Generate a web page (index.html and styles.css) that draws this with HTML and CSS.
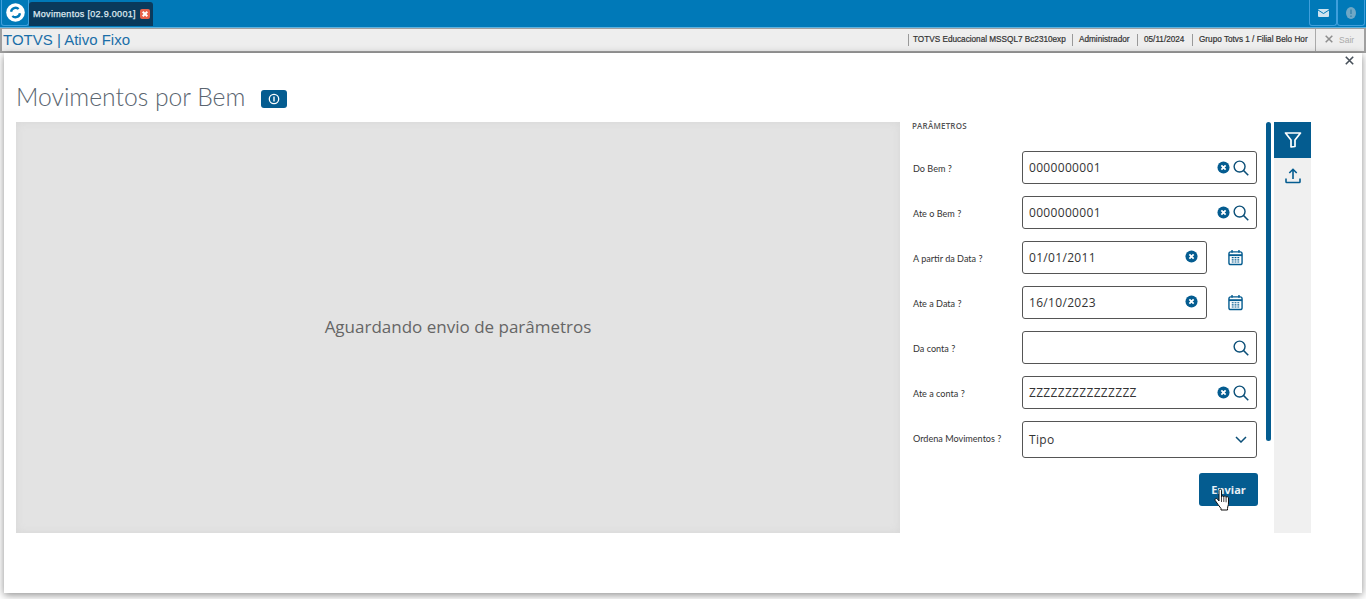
FILE: index.html
```html
<!DOCTYPE html>
<html lang="pt-BR">
<head>
<meta charset="utf-8">
<title>Movimentos por Bem</title>
<link rel="stylesheet" href="styles.css">
</head>
<body>
<svg class="defs" width="0" height="0" aria-hidden="true">
  <symbol id="clear" viewBox="0 0 14 14"><circle cx="7" cy="7" r="6.5" fill="#045c90"/><path d="M4.700 4.700l4.600 4.600M9.300 4.700l-4.600 4.600" stroke="#fff" stroke-width="1.900" fill="none"/></symbol>
  <symbol id="search" viewBox="0 0 17 17"><circle cx="7" cy="7" r="5.800" stroke="#0b4f78" stroke-width="1.500" fill="none"/><path d="M11.200 11.200l5 5" stroke="#0b4f78" stroke-width="1.700" fill="none"/></symbol>
  <symbol id="calendar" viewBox="0 0 16 17"><rect x="1" y="2.500" width="14" height="13.500" rx="2" fill="none" stroke="#045c90" stroke-width="1.500"/><path d="M1 6h14" stroke="#045c90" stroke-width="2"/><path d="M4.300 .5v3M11.700 .5v3" stroke="#045c90" stroke-width="1.500"/><path d="M4 8.700h2M7 8.700h2M10 8.700h2M4 11h2M7 11h2M10 11h2M4 13.300h2M7 13.300h2M10 13.300h2" stroke="#045c90" stroke-width="1.200"/></symbol>
</svg>

<header class="topbar">
  <div class="logo">
    <svg width="19" height="19" viewBox="0 0 18 18"><circle cx="9" cy="9" r="8.800" fill="#fff"/><path d="M4.800 8.300A4.300 4.300 0 0 1 12 5.700M13.200 9.700A4.300 4.300 0 0 1 6 12.300" stroke="#0079b8" stroke-width="2.200" fill="none"/></svg>
  </div>
  <div class="tab">
    <span class="tab-text">Movimentos [02.9.0001]</span>
    <svg class="tab-close" width="10" height="10" viewBox="0 0 10 10"><rect width="10" height="10" rx="2" fill="#e8604a"/><path d="M2.700 2.700l4.600 4.600M7.300 2.700l-4.600 4.600" stroke="#fff" stroke-width="2"/></svg>
  </div>
  <div class="top-actions">
    <div class="top-btn">
      <svg width="11" height="8" viewBox="0 0 11 8"><rect width="11" height="8" rx="1" fill="#cfe3ef"/><path d="M0 1l5.500 3.500L11 1" stroke="#0079b8" stroke-width="1" fill="none"/></svg>
    </div>
    <div class="top-btn">
      <svg width="10" height="12" viewBox="0 0 10 12"><ellipse cx="5" cy="6" rx="5" ry="6" fill="#6fa8c6"/><path d="M5 2.500v4.500M5 8.500v1.500" stroke="#3f88ae" stroke-width="1.600"/></svg>
    </div>
  </div>
</header>

<div class="statusbar">
  <div class="app-name">TOTVS | Ativo Fixo</div>
  <div class="status-info">
    <span class="info info-db">TOTVS Educacional MSSQL7 Bc2310exp</span>
    <span class="info info-user">Administrador</span>
    <span class="info info-date">05/11/2024</span>
    <span class="info info-branch">Grupo Totvs 1 / Filial Belo Hor</span>
    <span class="info info-exit"><svg class="exit-x" width="8" height="8" viewBox="0 0 8 8"><path d="M.7.7l6.600 6.600M7.300.7L.7 7.300" stroke="#8d8d8d" stroke-width="1.500"/></svg>Sair</span>
  </div>
</div>

<main class="window">
  <div class="close-row">
    <svg width="9" height="9" viewBox="0 0 9 9"><path d="M.8.8l7.400 7.400M8.200.8L.8 8.200" stroke="#47505a" stroke-width="1.600"/></svg>
  </div>
  <div class="title-row">
    <h1 class="page-title">Movimentos por Bem</h1>
    <span class="info-badge">
      <svg width="12" height="12" viewBox="0 0 12 12"><circle cx="6" cy="6" r="4.700" fill="none" stroke="#fff" stroke-width="1.300"/><path d="M6 3.400v5.200" stroke="#fff" stroke-width="1.400"/></svg>
    </span>
  </div>
  <div class="content">
    <section class="preview">Aguardando envio de parâmetros</section>
    <section class="params">
      <div class="params-title">PARÂMETROS</div>
      <div class="form">
        <label class="lbl">Do Bem ?</label>
        <div class="input"><span class="val">0000000001</span><svg class="ic-clear"><use href="#clear"/></svg><svg class="ic-search"><use href="#search"/></svg></div>
        <label class="lbl">Ate o Bem ?</label>
        <div class="input"><span class="val">0000000001</span><svg class="ic-clear"><use href="#clear"/></svg><svg class="ic-search"><use href="#search"/></svg></div>
        <label class="lbl">A partir da Data ?</label>
        <div class="date-wrap"><div class="input input-date"><span class="val">01/01/2011</span><svg class="ic-clear"><use href="#clear"/></svg></div><svg class="ic-cal"><use href="#calendar"/></svg></div>
        <label class="lbl">Ate a Data ?</label>
        <div class="date-wrap"><div class="input input-date"><span class="val">16/10/2023</span><svg class="ic-clear"><use href="#clear"/></svg></div><svg class="ic-cal"><use href="#calendar"/></svg></div>
        <label class="lbl">Da conta ?</label>
        <div class="input"><span class="val"></span><svg class="ic-search"><use href="#search"/></svg></div>
        <label class="lbl">Ate a conta ?</label>
        <div class="input"><span class="val">ZZZZZZZZZZZZZZZ</span><svg class="ic-clear"><use href="#clear"/></svg><svg class="ic-search"><use href="#search"/></svg></div>
        <label class="lbl">Ordena Movimentos ?</label>
        <div class="input input-select"><span class="val">Tipo</span><svg class="ic-chev" viewBox="0 0 12 7"><path d="M1 1l5 5 5-5" fill="none" stroke="#0b4f78" stroke-width="1.500"/></svg></div>
      </div>
      <div class="actions">
        <button class="send" type="button">Enviar
          <svg class="cursor" width="17" height="24" viewBox="0 0 17 24"><path d="M5 2.500c0-1.800 2.500-1.800 2.500 0V9c0-1.500 2.300-1.500 2.300 0 0-1.300 2.300-1.300 2.300.3 0-1 2.400-.8 2.400.7v5c0 2.500-.8 3-1 5.500v1.500H7v-1.500C5 18 3 15 1.200 12.500c-.8-1.300.8-2.800 2-1.700L5 13z" fill="#fff" stroke="#111" stroke-width="1"/><path d="M7.500 9v5M9.800 9v5M12.100 9.300v5" stroke="#111" stroke-width=".8" fill="none"/></svg>
        </button>
      </div>
    </section>
    <div class="scrollbar"><div class="thumb"></div></div>
    <nav class="sidetabs">
      <div class="sidetab active">
        <svg width="18" height="18" viewBox="0 0 18 18"><path d="M1.500 2h15L11 9v6.500L7 16V9z" fill="none" stroke="#fff" stroke-width="1.700" stroke-linejoin="round"/></svg>
      </div>
      <div class="sidetab">
        <svg width="16" height="16" viewBox="0 0 16 16"><path d="M8 11V1.500M4.300 5L8 1.300 11.700 5" fill="none" stroke="#045c90" stroke-width="1.600"/><path d="M1 10.500v3.200c0 .5.400.8.800.8h12.400c.4 0 .8-.3.800-.8v-3.200" fill="none" stroke="#045c90" stroke-width="1.600"/></svg>
      </div>
    </nav>
  </div>
</main>
</body>
</html>
```

FILE: styles.css
```css
* { box-sizing: border-box; }
html, body { margin: 0; height: 599px; overflow: hidden; }
body { background: #fff; display: flex; flex-direction: column; font-family: "Open Sans", sans-serif; }
.defs { position: absolute; }

.topbar { height: 28px; flex: none; background: #0079b8; border-bottom: 1px solid #5fb3e0; display: flex; align-items: flex-start; }
.logo { width: 28px; height: 26px; margin-left: 1px; border: 1px solid #3f9fdc; border-top: 0; border-radius: 0 0 3px 3px; display: flex; align-items: center; justify-content: center; }
.tab { margin: 2px 0 0 0; width: 124px; height: 24px; background: #0a3a5c; border-radius: 3px 3px 0 0; color: #dfe9f0; display: flex; align-items: center; padding-left: 4px; font: 400 9px "Liberation Sans", sans-serif; -webkit-text-stroke: .25px #dfe9f0; letter-spacing: .31px; white-space: nowrap; }
.tab-close { margin-left: 4px; flex: none; }
.top-actions { margin-left: auto; display: flex; margin-right: 1px; }
.top-btn { width: 28px; height: 26px; border: 1px solid #3f9fdc; border-top: 0; border-radius: 0 0 3px 3px; display: flex; align-items: center; justify-content: center; }

.statusbar { height: 25px; flex: none; background: #eee; border: 2px solid #a0a0a0; border-width: 1px 2px 2px; display: flex; align-items: center; justify-content: space-between; padding-left: 1px; }
.app-name { font: 15px "Liberation Sans", sans-serif; color: #1b6ea8; padding-bottom: 2px; }
.status-info { display: flex; align-items: center; height: 100%; font: 400 8.2px "Liberation Sans", sans-serif; -webkit-text-stroke: .2px #333; color: #333; white-space: nowrap; }
.info { height: 12px; line-height: 12px; border-left: 1px solid #999; padding-left: 4px; flex: none; }
.info-db { width: 164px; }
.info-user { width: 65px; padding-left: 6px; }
.info-date { width: 55px; padding-left: 6px; }
.info-branch { width: 123px; padding-left: 6px; }
.info-exit { width: 49px; height: 22px; line-height: 22px; padding-left: 9px; color: #aaa; border-left: 1px solid #aaa; -webkit-text-stroke: 0; font-size: 8.5px; }
.exit-x { margin-right: 6px; }

.window { flex: none; height: 540px; margin: 0 4px; box-shadow: 0 2px 8px rgba(0,0,0,.45); background: #fff; padding: 0 12px; position: relative; }
.close-row { height: 12px; display: flex; justify-content: flex-end; align-items: flex-end; margin-right: -4px; }
.title-row { display: flex; align-items: center; height: 57px; gap: 16px; padding-top: 6px; }
.page-title { margin: 0; font: 300 24.7px Lato, sans-serif; color: #5a6570; }
.info-badge { width: 26px; height: 18px; background: #045c90; border-radius: 3px; display: flex; align-items: center; justify-content: center; margin-top: 5px; }

.content { display: flex; height: 411px; }
.preview { width: 884px; flex: none; background: #e3e3e3; box-shadow: inset 0 0 8px #d6d6d6; display: flex; align-items: center; justify-content: center; font-size: 17px; color: #666; padding-bottom: 2px; }
.params { width: 366px; flex: none; padding: 0 9px 0 12px; }
.params-title { font-size: 8px; font-weight: 600; color: #555; height: 29px; line-height: 7px; letter-spacing: .2px; }
.form { display: grid; grid-template-columns: 109px 235px; grid-auto-rows: 33px; row-gap: 12px; margin-left: 1px; }
.lbl { font: 9.1px Lato, sans-serif; color: #333; align-self: center; padding-top: 2px; }
.input { border: 1px solid #555; border-radius: 3px; background: #fff; display: flex; align-items: center; padding: 0 7px 0 6px; min-width: 0; }
.input-select { height: 37px; }
.input-select .ic-chev { margin-right: 2px; }
.val { flex: 1; font-size: 12px; color: #333; letter-spacing: .32px; padding-bottom: 1px; }
.ic-clear { width: 13px; height: 13px; margin-right: 3px; }
.ic-search { width: 16px; height: 16px; }
.ic-chev { width: 12px; height: 7px; }
.date-wrap { display: flex; align-items: center; }
.input-date { width: 185px; height: 33px; flex: none; padding-right: 8px; }
.input-date .ic-clear { margin: 0 0 2px; }
.ic-cal { width: 15px; height: 17px; margin-left: 21px; }
.actions { display: flex; justify-content: flex-end; margin-top: 19px; margin-right: -1px; }
.send { width: 59px; height: 33px; border: 0; border-radius: 3px; background: #045c90; color: #e8f0f5; font: 700 11px "Open Sans", sans-serif; position: relative; padding: 0; }
.cursor { position: absolute; left: 15px; top: 15px; }

.scrollbar { width: 8px; flex: none; }
.thumb { width: 5px; height: 319px; background: #045c90; border-radius: 3px; }
.sidetabs { width: 37px; flex: none; background: #f0f0f0; }
.sidetab { height: 36px; display: flex; align-items: center; justify-content: center; }
.sidetab.active { background: #045c90; }
```
